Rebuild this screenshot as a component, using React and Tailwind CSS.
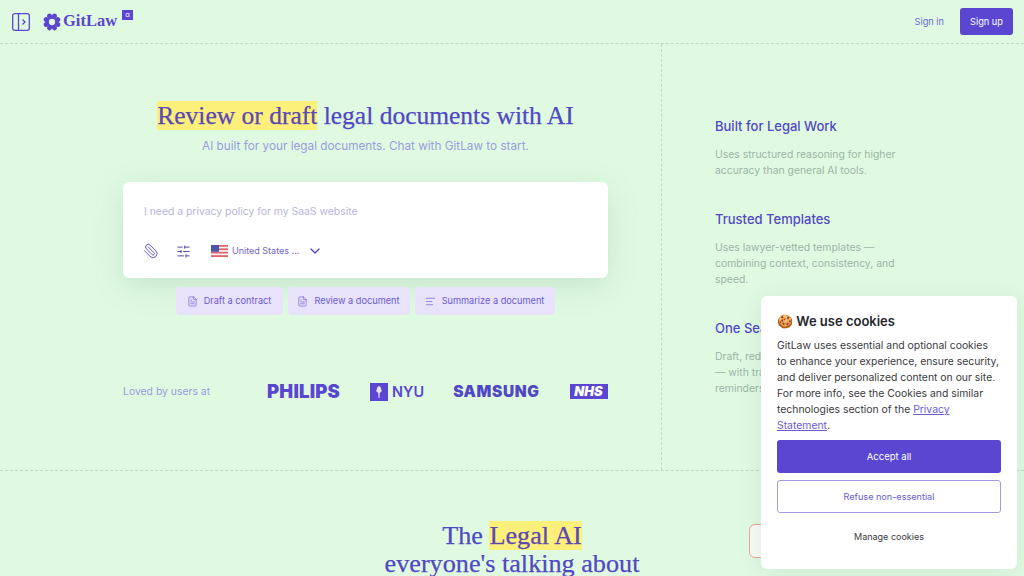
import React from "react";
import { Paperclip, SlidersHorizontal, ChevronDown, FileText, AlignLeft } from "lucide-react";

const sans = "font-['Inter','Noto_Sans',sans-serif]";

const features = [
  { title: "Built for Legal Work", lines: ["Uses structured reasoning for higher", "accuracy than general AI tools."] },
  { title: "Trusted Templates", lines: ["Uses lawyer-vetted templates —", "combining context, consistency, and", "speed."] },
  { title: "One Seamless Workflow", lines: ["Draft, redline, and review in one place", "— with track changes, comments, and", "reminders."] },
];

const cookieLines = [
  "GitLaw uses essential and optional cookies",
  "to enhance your experience, ensure security,",
  "and deliver personalized content on our site.",
  "For more info, see the Cookies and similar",
];

function Chip({ icon: Icon, label, width }) {
  return (
    <div className={`flex h-7 items-center justify-center gap-[6px] rounded-sm bg-[#e8e3fb] pr-[1px] text-[9.2px] text-[#6a5bd0] ${width}`}>
      <Icon size={11} strokeWidth={1.4} />
      <span>{label}</span>
    </div>
  );
}

function Flag() {
  return (
    <svg width="17" height="12" viewBox="0 0 17 12">
      <rect width="17" height="12" fill="#f4f1f4" />
      <rect width="17" height="1.7" fill="#e2626b" />
      <rect y="3.4" width="17" height="1.7" fill="#e2626b" />
      <rect y="6.8" width="17" height="1.7" fill="#e2626b" />
      <rect y="10.2" width="17" height="1.8" fill="#e2626b" />
      <rect width="8" height="6.8" fill="#4a55a8" />
    </svg>
  );
}

function Logo() {
  const petals = [0, 45, 90, 135, 180, 225, 270, 315];
  return (
    <svg width="18" height="18" viewBox="0 0 20 20" fill="#5b46d1">
      {petals.map((a) => (
        <ellipse key={a} cx="10" cy="3.2" rx="2.8" ry="3" transform={`rotate(${a + 22.5} 10 10)`} />
      ))}
      <circle cx="10" cy="10" r="4.400" fill="none" stroke="#5b46d1" strokeWidth="1.800" />
    </svg>
  );
}

function Torch() {
  return (
    <svg width="18" height="18" viewBox="0 0 18 18" className="ml-[30px] shrink-0">
      <rect width="18" height="18" fill="#5b46d1" />
      <path d="M9 3c1.800 1 2.600 2.200 2 3.500.9.300 1 1.500.2 2.300-.7.700-1.300 1-1.500 1.400L9.500 15h-1l-.2-4.800c-.2-.4-.8-.7-1.500-1.400-.8-.8-.7-2 .2-2.300C6.400 5.200 7.200 4 9 3z" fill="#e8e3fb" />
    </svg>
  );
}

export default function App() {
  return (
    <div className={`relative flex h-[576px] w-[1024px] flex-col overflow-hidden bg-[#e0fae2] ${sans}`}>
      <header className="flex h-11 shrink-0 items-center justify-between border-b border-dashed border-[#bcdcc4] pl-3 pr-[11px]">
        <div className="flex items-center">
          <svg width="18" height="18" viewBox="0 0 18 18" fill="none" stroke="#5b46d1" strokeWidth="1.3">
            <rect x="0.7" y="0.7" width="16.6" height="16.6" rx="2" />
            <path d="M6.500 1v16" />
            <path d="M10.500 6.500 13 9l-2.500 2.500" />
          </svg>
          <div className="ml-[13px] flex"><Logo /></div>
          <span className="ml-[2px] font-['Liberation_Serif',serif] text-[16.500px] font-bold text-[#5b46d1]">GitLaw</span>
          <span className="mb-[14px] ml-[5px] flex h-[10px] w-[11px] items-center justify-center bg-[#5b46d1] text-[7px] leading-none text-white">α</span>
        </div>
        <div className="flex items-center">
          <span className="text-[9.200px] text-[#6a6ad6]">Sign in</span>
          <button className="ml-[16px] h-[27px] w-[53px] rounded-[3px] bg-[#5b46d1] text-[9.200px] text-white">Sign up</button>
        </div>
      </header>

      <div className="flex h-[427px] shrink-0 border-b border-dashed border-[#bcdcc4]">
        <main className="w-[662px] shrink-0 border-r border-dashed border-[#bcdcc4] pl-[123px] pr-[53px]">
          <h1 className="mt-[56px] text-center font-['Liberation_Serif',serif] text-[25.500px] leading-[32px] text-[#5048c4] [-webkit-text-stroke:0.25px]">
            <span className="bg-[#fdf07a] text-[#5a48b4]">Review or draft</span> legal documents with AI
          </h1>
          <p className="mt-[4px] text-center text-[11.750px] leading-5 text-[#9a9be0]">AI built for your legal documents. Chat with GitLaw to start.</p>
          <div className="mt-[26px] h-[96px] rounded-md bg-white pl-[21px] pr-[20px] pt-[22px] shadow-[0_8px_30px_rgba(80,140,100,0.18)]">
            <p className="text-[10.400px] leading-4 text-[#b9b5dc]">I need a privacy policy for my SaaS website</p>
            <div className="mt-[23px] flex items-center text-[#5b46d1]">
              <Paperclip size={16} strokeWidth={1.4} className="-ml-[1px] -scale-x-100" />
              <SlidersHorizontal size={15} strokeWidth={1.5} className="ml-[17px] text-[#4a3fb0]" />
              <div className="ml-[20px] flex"><Flag /></div>
              <span className="ml-[4px] text-[9px] text-[#6f64c8]">United States ...</span>
              <ChevronDown size={16} strokeWidth={1.8} className="ml-[8px] text-[#4a3fb0]" />
            </div>
          </div>
          <div className="ml-[53px] mt-[9px] flex gap-[5px]">
            <Chip icon={FileText} label="Draft a contract" width="w-[107px]" />
            <Chip icon={FileText} label="Review a document" width="w-[122px]" />
            <Chip icon={AlignLeft} label="Summarize a document" width="w-[140px]" />
          </div>
          <div className="mt-[63px] flex items-center">
            <span className="w-[144px] shrink-0 text-[10.400px] text-[#9a9be0]">Loved by users at</span>
            <span className="text-[18.500px] font-black tracking-[0.2px] text-[#5b46d1]">PHILIPS</span>
            <Torch />
            <span className="ml-[4px] text-[14.500px] font-semibold text-[#5b46d1]">NYU</span>
            <span className="ml-[29px] text-[15.500px] font-black tracking-[0.6px] text-[#5048c4]">SAMSUNG</span>
            <span className="ml-[30px] flex h-[15px] w-[38px] items-center justify-center bg-[#5b46d1] text-[13px] font-black italic leading-none text-white">NHS</span>
          </div>
        </main>
        <aside className="flex-1 pl-[53px] pt-[72px]">
          {features.map((f) => (
            <div key={f.title} className="mb-[30px]">
              <h3 className="text-[13px] font-medium leading-5 text-[#5048c4]">{f.title}</h3>
              <div className="mt-[11px] text-[10.400px] leading-4 text-[#9ab5a6]">
                {f.lines.map((l) => <div key={l}>{l}</div>)}
              </div>
            </div>
          ))}
        </aside>
      </div>

      <section className="relative flex-1">
        <h2 className="mt-[51px] text-center font-['Liberation_Serif',serif] text-[26.200px] leading-[28px] text-[#5048c4] [-webkit-text-stroke:0.25px]">
          The <span className="bg-[#fdf07a] text-[#5a48b4]">Legal AI</span>
          <br />
          everyone's talking about
        </h2>
        <div className="absolute left-[749px] top-[53px] h-[34px] w-[40px] rounded-md border border-[#eda78f] bg-[#f6fbf6]" />
      </section>

      <div className="absolute left-[761px] top-[296px] w-[256px] rounded-md bg-white px-4 pb-[16px] pt-[16px] shadow-[0_4px_24px_rgba(0,0,0,0.08)]">
        <div className="text-[13px] font-semibold leading-[19px] text-[#26262b]">🍪 We use cookies</div>
        <div className="mt-[7px] whitespace-nowrap text-[10.400px] leading-4 text-[#3a3a40]">
          {cookieLines.map((l) => <div key={l}>{l}</div>)}
          <div>technologies section of the <a href="#" className="text-[#6a5bd0] underline">Privacy</a></div>
          <div><a href="#" className="text-[#6a5bd0] underline">Statement</a>.</div>
        </div>
        <button className="mt-[6px] h-[33px] w-full rounded-[3px] bg-[#5b46d1] pt-px text-[9.500px] text-white">Accept all</button>
        <button className="mt-[7px] h-[33px] w-full rounded-[3px] border border-[#a79ae3] pt-px text-[9.100px] text-[#6a5bd0]">Refuse non-essential</button>
        <button className="mt-[7px] h-[33px] w-full pt-px text-[9px] text-[#3a3a40]">Manage cookies</button>
      </div>
    </div>
  );
}
